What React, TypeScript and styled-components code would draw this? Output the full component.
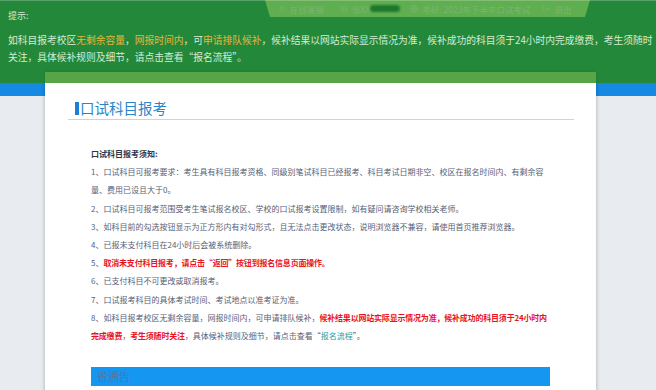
import React from "react";
import styled, { createGlobalStyle } from "styled-components";
import { User, IdCard, Globe, LogOut } from "lucide-react";

const GlobalStyle = createGlobalStyle`
  html, body { margin: 0; padding: 0; }
  body {
    background: #e8ecf0;
    font-family: "Noto Sans CJK SC", "Noto Sans", sans-serif;
    overflow: hidden;
  }
`;

const Page = styled.div`
  width: 656px;
  height: 390px;
  overflow: hidden;
  position: relative;
`;

const Header = styled.header`
  height: 72px;
  background: #2d9146;
  display: flex;
  justify-content: flex-end;
  align-items: flex-start;
  padding-right: 66px;
`;

const NavPill = styled.nav`
  width: 325px;
  height: 17px;
  box-sizing: border-box;
  background: #c0f07a;
  clip-path: polygon(0 0, 100% 0, calc(100% - 5px) 100%, 5px 100%);
  display: flex;
  align-items: center;
  padding-left: 13px;
  font-size: 8.5px;
  color: #ffffd0;
  white-space: nowrap;
`;

const NavItem = styled.span<{ $gap?: number }>`
  display: inline-flex;
  align-items: center;
  gap: 4px;
  margin-right: ${(p) => p.$gap ?? 14}px;
`;

const Redact = styled.span`
  display: inline-block;
  width: 30px;
  height: 7px;
  border-radius: 4px;
  background: #1d6a2a;
  filter: blur(1px);
  margin-right: 10px;
`;

const Main = styled.main`
  display: grid;
  grid-template-columns: 45px 551px 60px;
  min-height: 330px;
`;

const Gutter = styled.div`
  background: linear-gradient(
    to bottom,
    #2d9146 0 11px,
    #168ae2 11px 24px,
    #e8ecf0 24px
  );
`;

const Card = styled.section`
  background: #fff;
  border-top: 11px solid #afd969;
  box-shadow: 0 0 4px rgba(0, 0, 0, 0.28);
  position: relative;
  z-index: 1;
  min-height: 320px;
`;

const TitleWrap = styled.div`
  margin: 0 22px 0 23px;
  padding: 17px 0 3px 7px;
  border-bottom: 1px solid #cfd3d8;
`;

const Title = styled.h2`
  margin: 0;
  font-size: 14.5px;
  line-height: 16px;
  font-weight: normal;
  color: #2a85c8;
  display: flex;
  align-items: center;
  gap: 1px;
  &::before {
    content: "";
    width: 4px;
    height: 13px;
    background: #1a80d8;
  }
`;

const Notice = styled.div`
  margin: 25px 0 0 46px;
  width: 458px;
  font-size: 8px;
  line-height: 18.2px;
  color: #555f78;
`;

const Line = styled.p<{ $bold?: boolean }>`
  margin: 0;
  font-weight: ${(p) => (p.$bold ? "bold" : "normal")};
  color: ${(p) => (p.$bold ? "#2f364a" : "inherit")};
`;

const Red = styled.b`
  color: #e8141e;
  letter-spacing: -0.2px;
`;

const Teal = styled.span`
  color: #2a9a9a;
`;

const Bar = styled.div`
  margin: 22px 0 0 46px;
  width: 459px;
  height: 19px;
  box-sizing: border-box;
  background: #1596f0;
  color: #5b7699;
  font-size: 11px;
  line-height: 19px;
  padding-left: 6px;
`;

const Toast = styled.div`
  position: absolute;
  top: 0;
  left: 0;
  right: 0;
  height: 83px;
  box-sizing: border-box;
  background: rgba(30, 130, 50, 0.6);
  border-top: 1px solid rgba(255, 255, 255, 0.22);
  padding: 9px 2px 0 8px;
  z-index: 10;
  color: #d5ecd5;
`;

const ToastTitle = styled.div`
  font-size: 9px;
  line-height: 12px;
`;

const ToastText = styled.div`
  margin-top: 9.5px;
  font-size: 9.75px;
  line-height: 17px;
`;

const Hl = styled.span`
  color: #e6b43c;
`;

export default function App() {
  return (
    <>
      <GlobalStyle />
      <Page>
        <Header>
          <NavPill>
            <NavItem $gap={16}>
              <User size={8} />
              在线客服
            </NavItem>
            <NavItem $gap={0}>
              <IdCard size={8} />
              张XX
            </NavItem>
            <Redact />
            <NavItem $gap={12}>
              <Globe size={8} />
              考研: 2023年下半年口试考试
            </NavItem>
            <NavItem $gap={0}>
              <LogOut size={8} />
              退出
            </NavItem>
          </NavPill>
        </Header>
        <Main>
          <Gutter />
          <Card>
            <TitleWrap>
              <Title>口试科目报考</Title>
            </TitleWrap>
            <Notice>
              <Line $bold>口试科目报考须知:</Line>
              <Line>
                1、口试科目可报考要求：考生具有科目报考资格、同级别笔试科目已经报考、科目考试日期非空、校区在报名时间内、有剩余容量、费用已设且大于0。
              </Line>
              <Line>
                2、口试科目可报考范围受考生笔试报名校区、学校的口试报考设置限制，如有疑问请咨询学校相关老师。
              </Line>
              <Line>
                3、如科目前的勾选按钮显示为正方形内有对勾形式，且无法点击更改状态，说明浏览器不兼容，请使用首页推荐浏览器。
              </Line>
              <Line>4、已报未支付科目在24小时后会被系统删除。</Line>
              <Line>
                5、<Red>取消未支付科目报考，请点击“返回”按钮到报名信息页面操作。</Red>
              </Line>
              <Line>6、已支付科目不可更改或取消报考。</Line>
              <Line>7、口试报考科目的具体考试时间、考试地点以准考证为准。</Line>
              <Line>
                8、如科目报考校区无剩余容量，网报时间内，可申请排队候补，
                <Red>候补结果以网站实际显示情况为准，候补成功的科目须于24小时内完成缴费</Red>，
                <Red>考生须随时关注</Red>，具体候补规则及细节，请点击查看“<Teal>报名流程</Teal>”。
              </Line>
            </Notice>
            <Bar>省通告</Bar>
          </Card>
          <Gutter />
        </Main>
        <Toast>
          <ToastTitle>提示:</ToastTitle>
          <ToastText>
            如科目报考校区<Hl>无剩余容量</Hl>，<Hl>网报时间内</Hl>，可<Hl>申请排队候补</Hl>，候补结果以网站实际显示情况为准，候补成功的科目须于24小时内完成缴费，考生须随时关注，具体候补规则及细节，请点击查看“报名流程”。
          </ToastText>
        </Toast>
      </Page>
    </>
  );
}
